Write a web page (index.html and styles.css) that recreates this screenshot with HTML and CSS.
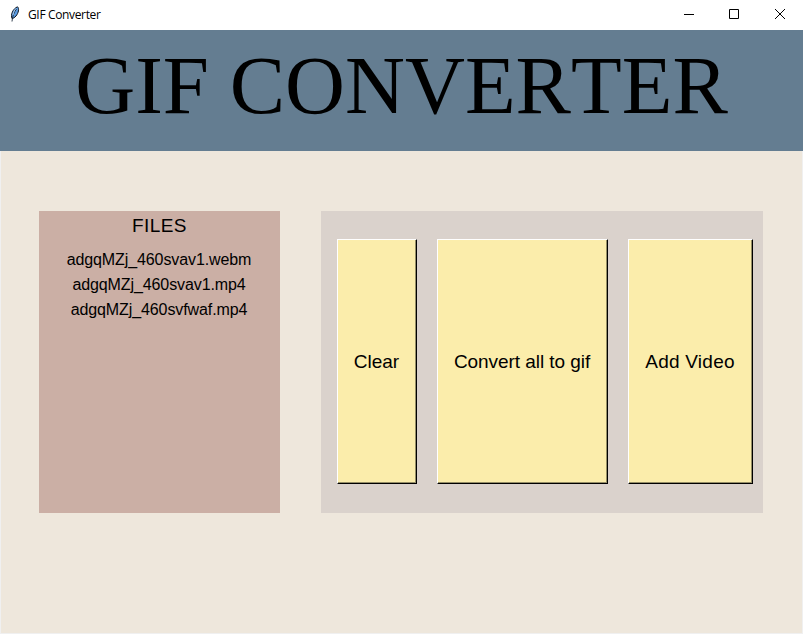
FILE: index.html
```html
<!DOCTYPE html>
<html lang="en">
<head>
<meta charset="utf-8">
<title>GIF Converter</title>
<link rel="stylesheet" href="styles.css">
</head>
<body>
<div class="window">
  <header class="titlebar">
    <svg class="feather" width="16" height="16" viewBox="0 0 16 16">
      <path d="M5 12.500C3.500 9 5.500 3 10.500 .800 12.500 2.500 11.500 7 9 10 7.500 11.500 6.500 12.300 5 12.500Z" fill="#5b9be0" stroke="#10151c"/>
      <path d="M5 15.500C5.300 11 7 6 9.500 3" fill="none" stroke="#1c2a3c" stroke-width=".9"/>
      <path d="M6 9C6.500 6 7.500 4 9 2.500" fill="none" stroke="#b7d5f5" stroke-width=".9"/>
    </svg>
    <span class="caption">GIF Converter</span>
    <div class="controls">
      <svg width="46" height="30" viewBox="0 0 46 30"><path d="M19 14.500h10"/></svg>
      <svg width="46" height="30" viewBox="0 0 46 30"><path d="M18.500 9.500h9v9h-9z"/></svg>
      <svg width="46" height="30" viewBox="0 0 46 30"><path d="m18 9 10 10M28 9 18 19"/></svg>
    </div>
  </header>
  <h1 class="banner"><span>GIF CONVERTER</span></h1>
  <main class="content">
    <section class="files">
      <h2>FILES</h2>
      <ul>
        <li>adgqMZj_460svav1.webm</li>
        <li>adgqMZj_460svav1.mp4</li>
        <li>adgqMZj_460svfwaf.mp4</li>
      </ul>
    </section>
    <section class="actions">
      <button class="clear">Clear</button>
      <button class="convert">Convert all to gif</button>
      <button class="add">Add Video</button>
    </section>
  </main>
</div>
</body>
</html>
```
FILE: styles.css
```css
* { box-sizing: border-box; }
body { margin: 0; }
.window { width: 803px; height: 634px; display: flex; flex-direction: column; overflow: hidden; background: #eee7dc; color: #000; font-family: "Liberation Sans", Arial, sans-serif; }
.titlebar { height: 30px; display: flex; align-items: center; background: #fff; padding: 0 0 2px 7px; }
.feather { margin-right: 5px; }
.caption { font: 12px "Open Sans", sans-serif; letter-spacing: -0.35px; }
.controls { display: flex; height: 28px; margin-left: auto; }
.controls svg { fill: none; stroke: #000; stroke-width: 1; }
.banner { margin: 0; height: 121px; background: #647d91; text-align: center; font: 83px/111px "Liberation Serif", "Times New Roman", serif; font-kerning: none; white-space: nowrap; }
.content { flex: 1; display: flex; align-items: flex-start; gap: 41px; padding: 60px 39px 0 38px; border: solid #f0f0f0; border-width: 0 1px 1px; }
.files { flex: none; width: 241px; height: 302px; background: #cbafa5; text-align: center; }
.files h2 { margin: 0; font-size: 19px; font-weight: 400; line-height: 29px; letter-spacing: 0.4px; }
.files ul { margin: 7px 0 0; padding: 0 1px 0 0; list-style: none; font-size: 16px; line-height: 25px; letter-spacing: -0.1px; }
.actions { flex: none; width: 442px; height: 302px; display: flex; gap: 20px; padding: 28px 10px 29px 16px; background: #dad2cc; }
.actions button { flex: none; height: 245px; padding: 0 1px 0 0; border: 1px solid; border-color: #fff #000 #000 #fff; box-shadow: inset -1px -1px #958e66; background: #fbedab; color: #000; font: 19px "Liberation Sans", Arial, sans-serif; white-space: nowrap; }
.actions .clear { width: 80px; }
.actions .convert { width: 171px; letter-spacing: -0.06px; }
.actions .add { width: 125px; letter-spacing: 0.25px; }
```
